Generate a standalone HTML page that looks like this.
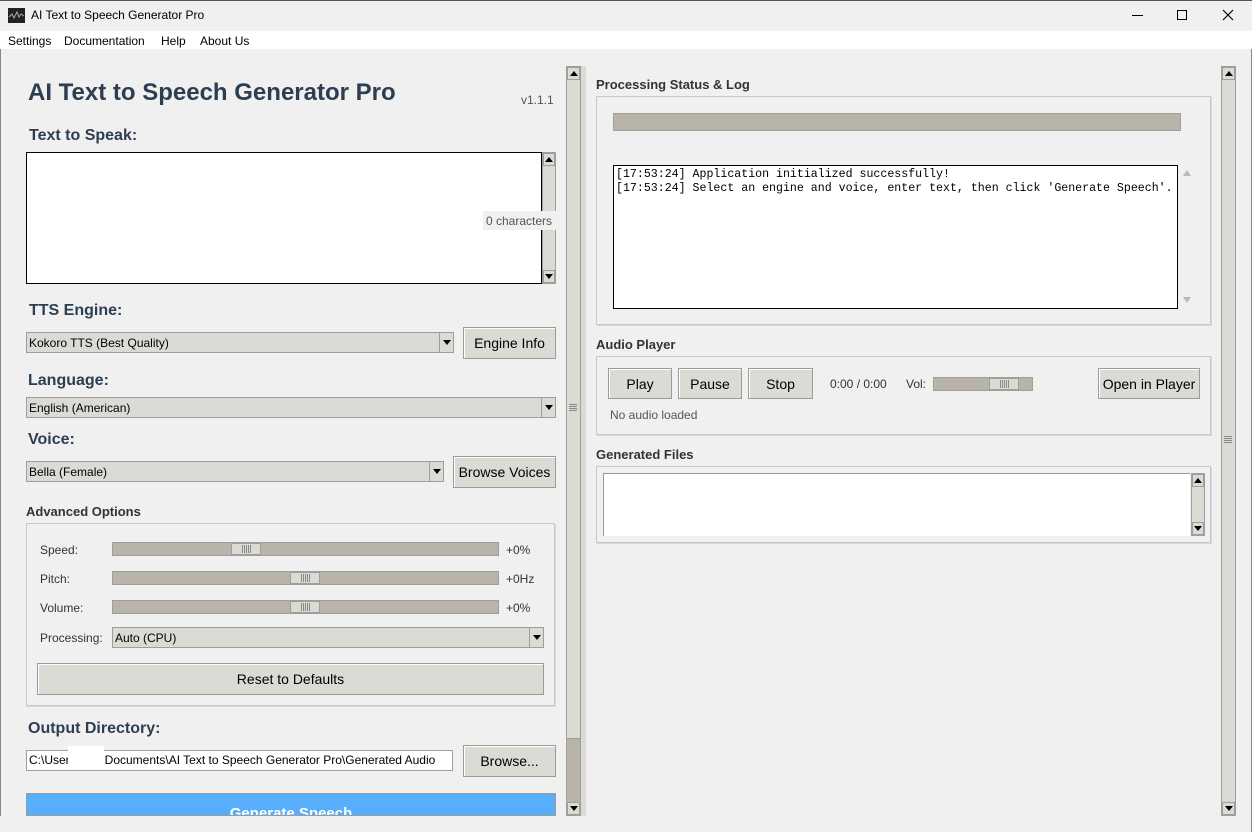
<!DOCTYPE html>
<html><head><meta charset="utf-8"><style>
*{box-sizing:border-box;margin:0;padding:0}
body{width:1252px;height:832px;background:#f0f0f0;font-family:"Liberation Sans",sans-serif;position:relative;overflow:hidden;color:#000}
.a{position:absolute}
.h{color:#2c3e50;font-weight:bold}
.btn{position:absolute;background:#dcdad5;border:1px solid #9d9b95;box-shadow:inset 1px 1px 0 #fff;font-size:14px;display:flex;align-items:center;justify-content:center;color:#000;white-space:nowrap}
.combo{position:absolute;background:#dcdad5;border:1px solid #a09e98;font-size:12px;padding-left:2px;display:flex;align-items:center}
.combo .ar{position:absolute;right:0;top:0;bottom:0;width:14px;border-left:1px solid #a09e98;display:flex;align-items:center;justify-content:center}
.tri{width:0;height:0;border-left:4px solid transparent;border-right:4px solid transparent;border-top:5px solid #000}
.triu{width:0;height:0;border-left:4px solid transparent;border-right:4px solid transparent;border-bottom:5px solid #000}
.trough{position:absolute;background:#b8b4aa;border:1px solid #a09e98}
.thumb{position:absolute;top:0;bottom:0;width:30px;background:#dcdad5;border:1px solid #a09e98;display:flex;justify-content:center;align-items:center}
.grip{width:9px;height:8px;background:repeating-linear-gradient(90deg,#888 0 1px,transparent 1px 2px)}
.lbl{position:absolute;font-size:12px;color:#333}
.grp{position:absolute;border:1px solid #c8c8c8;box-shadow:1px 1px 0 #d8d8d8}
.sb{position:absolute;background:#dcdad5;border:1px solid #a09e98}
.sbb{position:absolute;left:0;right:0;height:13px;background:#dcdad5;border:1px solid #a09e98;display:flex;align-items:center;justify-content:center}
</style></head><body>
<div class="a" style="left:0;top:0;width:1252px;height:31px;background:#f0f0f0;border-top:1px solid #555"></div>
<div class="a" style="left:8px;top:8px;width:17px;height:15px;background:#222"><svg width="17" height="15"><path d="M1 9 L4 6 L6 10 L9 4 L11 9 L13 6 L16 8" stroke="#aac" fill="none" stroke-width="1"/></svg></div>
<div class="a" style="left:31px;top:8px;font-size:12px">AI Text to Speech Generator Pro</div>
<div class="a" style="left:1132px;top:15px;width:11px;height:1px;background:#000"></div>
<div class="a" style="left:1177px;top:10px;width:10px;height:10px;border:1px solid #000"></div>
<svg class="a" style="left:1222px;top:9px" width="12" height="12"><path d="M1 1L11 11M11 1L1 11" stroke="#000" stroke-width="1.2"/></svg>
<div class="a" style="left:0;top:31px;width:1252px;height:18px;background:#fff"></div>
<div class="a" style="left:8px;top:34px;font-size:12px">Settings</div>
<div class="a" style="left:64px;top:34px;font-size:12px">Documentation</div>
<div class="a" style="left:161px;top:34px;font-size:12px">Help</div>
<div class="a" style="left:200px;top:34px;font-size:12px">About Us</div>
<div class="a" style="left:0;top:49px;width:1px;height:783px;background:#888"></div>
<div class="a" style="right:0;top:49px;width:1px;height:783px;background:#888"></div>

<div class="a h" style="left:28px;top:79px;font-size:24px">AI Text to Speech Generator Pro</div>
<div class="a" style="left:521px;top:93px;font-size:12px;color:#555">v1.1.1</div>
<div class="a h" style="left:29px;top:127px;font-size:16px">Text to Speak:</div>
<div class="a" style="left:26px;top:152px;width:516px;height:132px;background:#fff;border:1px solid #000"></div>
<div class="sb" style="left:542px;top:152px;width:14px;height:132px"><div class="sbb" style="top:0"><div class="triu"></div></div><div class="sbb" style="bottom:0"><div class="tri"></div></div></div>
<div class="a" style="left:483px;top:211px;width:74px;height:19px;background:#f0f0f0;font-size:12px;color:#555;padding:3px 0 0 3px">0 characters</div>

<div class="a h" style="left:29px;top:302px;font-size:16px">TTS Engine:</div>
<div class="combo" style="left:26px;top:332px;width:428px;height:21px">Kokoro TTS (Best Quality)<div class="ar"><div class="tri"></div></div></div>
<div class="btn" style="left:463px;top:327px;width:93px;height:32px">Engine Info</div>
<div class="a h" style="left:28px;top:372px;font-size:16px">Language:</div>
<div class="combo" style="left:26px;top:397px;width:530px;height:21px">English (American)<div class="ar"><div class="tri"></div></div></div>
<div class="a h" style="left:28px;top:431px;font-size:16px">Voice:</div>
<div class="combo" style="left:26px;top:461px;width:418px;height:21px">Bella (Female)<div class="ar"><div class="tri"></div></div></div>
<div class="btn" style="left:453px;top:456px;width:103px;height:32px">Browse Voices</div>

<div class="a h" style="left:26px;top:504px;font-size:13px;color:#333">Advanced Options</div>
<div class="grp" style="left:26px;top:523px;width:529px;height:183px"></div>
<div class="lbl" style="left:40px;top:543px">Speed:</div>
<div class="trough" style="left:112px;top:542px;width:387px;height:14px"><div class="thumb" style="left:118px"><div class="grip"></div></div></div>
<div class="lbl" style="left:506px;top:543px">+0%</div>
<div class="lbl" style="left:40px;top:572px">Pitch:</div>
<div class="trough" style="left:112px;top:571px;width:387px;height:14px"><div class="thumb" style="left:177px"><div class="grip"></div></div></div>
<div class="lbl" style="left:506px;top:572px">+0Hz</div>
<div class="lbl" style="left:40px;top:601px">Volume:</div>
<div class="trough" style="left:112px;top:600px;width:387px;height:14px"><div class="thumb" style="left:177px"><div class="grip"></div></div></div>
<div class="lbl" style="left:506px;top:601px">+0%</div>
<div class="lbl" style="left:40px;top:631px">Processing:</div>
<div class="combo" style="left:112px;top:627px;width:432px;height:21px">Auto (CPU)<div class="ar"><div class="tri"></div></div></div>
<div class="btn" style="left:37px;top:663px;width:507px;height:32px">Reset to Defaults</div>

<div class="a h" style="left:28px;top:720px;font-size:16px">Output Directory:</div>
<div class="a" style="left:26px;top:750px;width:427px;height:21px;background:#fff;border:1px solid #a09e98;font-size:12px;padding:2px 0 0 2px">C:\User<span style="display:inline-block;width:35px"></span>Documents\AI Text to Speech Generator Pro\Generated Audio</div>
<div class="a" style="left:68px;top:746px;width:36px;height:22px;background:#fff"></div>
<div class="btn" style="left:463px;top:745px;width:93px;height:32px">Browse...</div>
<div class="a" style="left:26px;top:793px;width:530px;height:23px;background:#58aefc;border:1px solid #9d9b95;color:#fff;font-weight:bold;font-size:15px;text-align:center;padding-top:12px;overflow:hidden;line-height:15px">Generate Speech</div>
<div class="a" style="left:0;top:816px;width:600px;height:16px;background:#f0f0f0"></div>

<div class="a" style="left:566px;top:66px;width:20px;height:750px;background:#dcdad5"></div>
<div class="sb" style="left:566px;top:66px;width:15px;height:750px;background:#b8b4aa">
<div class="a" style="left:0;right:0;top:12px;height:660px;background:#dcdad5;border-bottom:1px solid #a09e98"></div>
<div class="sbb" style="top:0"><div class="triu"></div></div><div class="sbb" style="bottom:0"><div class="tri"></div></div></div>
<div class="a" style="left:569px;top:404px;width:8px;height:7px;background:repeating-linear-gradient(#888 0 1px,transparent 1px 2px)"></div>

<div class="a h" style="left:596px;top:77px;font-size:13px;color:#333">Processing Status &amp; Log</div>
<div class="grp" style="left:596px;top:96px;width:615px;height:229px"></div>
<div class="a" style="left:613px;top:113px;width:568px;height:18px;background:#b8b4aa;border:1px solid #a09e98"></div>
<div class="a" style="left:613px;top:165px;width:565px;height:144px;background:#fff;border:1px solid #000;font-family:'Liberation Mono',monospace;font-size:11.6px;padding:2px 0 0 2px;line-height:14px;white-space:pre;overflow:hidden">[17:53:24] Application initialized successfully!
[17:53:24] Select an engine and voice, enter text, then click 'Generate Speech'.</div>
<div class="a" style="left:1183px;top:170px;border-left:4px solid transparent;border-right:4px solid transparent;border-bottom:6px solid #bbb"></div>
<div class="a" style="left:1183px;top:297px;border-left:4px solid transparent;border-right:4px solid transparent;border-top:6px solid #bbb"></div>

<div class="a h" style="left:596px;top:337px;font-size:13px;color:#333">Audio Player</div>
<div class="grp" style="left:596px;top:356px;width:615px;height:79px"></div>
<div class="btn" style="left:608px;top:368px;width:64px;height:31px">Play</div>
<div class="btn" style="left:678px;top:368px;width:64px;height:31px">Pause</div>
<div class="btn" style="left:748px;top:368px;width:65px;height:31px">Stop</div>
<div class="lbl" style="left:830px;top:377px">0:00 / 0:00</div>
<div class="lbl" style="left:906px;top:377px">Vol:</div>
<div class="trough" style="left:933px;top:377px;width:100px;height:14px"><div class="thumb" style="left:55px"><div class="grip"></div></div></div>
<div class="btn" style="left:1098px;top:368px;width:102px;height:31px">Open in Player</div>
<div class="lbl" style="left:610px;top:408px;color:#555">No audio loaded</div>

<div class="a h" style="left:596px;top:447px;font-size:13px;color:#333">Generated Files</div>
<div class="grp" style="left:596px;top:466px;width:615px;height:77px"></div>
<div class="a" style="left:603px;top:473px;width:587px;height:63px;background:#fff;border-top:1px solid #999;border-left:1px solid #999"></div>
<div class="sb" style="left:1191px;top:473px;width:14px;height:63px"><div class="sbb" style="top:0"><div class="triu"></div></div><div class="sbb" style="bottom:0"><div class="tri"></div></div></div>

<div class="sb" style="left:1221px;top:66px;width:15px;height:750px">
<div class="sbb" style="top:0"><div class="triu"></div></div><div class="sbb" style="bottom:0"><div class="tri"></div></div></div>
<div class="a" style="left:1224px;top:436px;width:8px;height:7px;background:repeating-linear-gradient(#888 0 1px,transparent 1px 2px)"></div>
</body></html>
